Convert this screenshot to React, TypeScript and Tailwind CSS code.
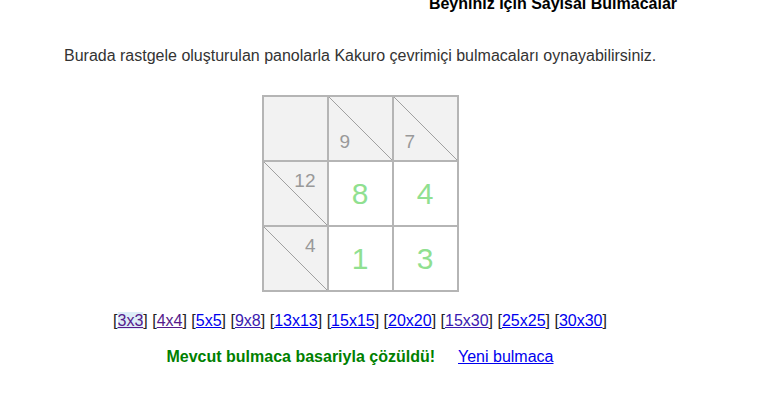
import React from "react";

type Cell =
  | { kind: "blank" }
  | { kind: "down"; value: number }
  | { kind: "across"; value: number }
  | { kind: "answer"; value: number };

const board: Cell[][] = [
  [{ kind: "blank" }, { kind: "down", value: 9 }, { kind: "down", value: 7 }],
  [{ kind: "across", value: 12 }, { kind: "answer", value: 8 }, { kind: "answer", value: 4 }],
  [{ kind: "across", value: 4 }, { kind: "answer", value: 1 }, { kind: "answer", value: 3 }],
];

const sizes: { label: string; color: string; active?: boolean }[] = [
  { label: "3x3", color: "text-[#551a8b]", active: true },
  { label: "4x4", color: "text-[#551a8b]" },
  { label: "5x5", color: "text-[#0000ee]" },
  { label: "9x8", color: "text-[#3b1ab0]" },
  { label: "13x13", color: "text-[#0000ee]" },
  { label: "15x15", color: "text-[#0000ee]" },
  { label: "20x20", color: "text-[#0000ee]" },
  { label: "15x30", color: "text-[#3b1ab0]" },
  { label: "25x25", color: "text-[#0000ee]" },
  { label: "30x30", color: "text-[#0000ee]" },
];

function Diagonal() {
  return (
    <svg className="absolute inset-0 h-full w-full" viewBox="0 0 63 63" preserveAspectRatio="none">
      <line x1="0" y1="0" x2="63" y2="63" stroke="#a0a0a0" strokeWidth="1" />
    </svg>
  );
}

function KakuroCell({ cell }: { cell: Cell }) {
  if (cell.kind === "answer") {
    return (
      <div className="flex h-[63px] w-[63px] items-center justify-center bg-white text-[30px] text-[#90e090]">
        {cell.value}
      </div>
    );
  }
  return (
    <div className="relative h-[63px] w-[63px] bg-[#f2f2f2] text-[19px] text-[#999]">
      {cell.kind !== "blank" && <Diagonal />}
      {cell.kind === "down" && (
        <span className="absolute bottom-[9px] left-[11px] leading-none">{cell.value}</span>
      )}
      {cell.kind === "across" && (
        <span className="absolute right-[11px] top-[9px] leading-none">{cell.value}</span>
      )}
    </div>
  );
}

export default function App() {
  return (
    <div className="h-[409px] w-[757px] overflow-hidden bg-white font-['Liberation_Sans',Arial,sans-serif] text-[16px] text-[#222]">
      <div className="mt-[-5px] pr-[80px] text-right text-[16px] font-bold leading-[18px] text-black">
        Beyniniz İçin Sayısal Bulmacalar
      </div>

      <p className="mt-[34px] pl-[64px] leading-[18px] text-[#333]">
        Burada rastgele oluşturulan panolarla Kakuro çevrimiçi bulmacaları oynayabilirsiniz.
      </p>

      <div className="w-[720px]">
        <div className="mx-auto mt-[30px] grid w-fit grid-cols-3 gap-[2px] border-2 border-[#b5b5b5] bg-[#b5b5b5]">
          {board.map((row, r) =>
            row.map((cell, c) => <KakuroCell key={`${r}-${c}`} cell={cell} />)
          )}
        </div>

        <div className="mt-[20px] text-center leading-[18px]">
          {sizes.map((s, i) => (
            <React.Fragment key={s.label}>
              {i > 0 && " "}
              [
              <a
                href="#"
                className={`underline ${s.color} ${s.active ? "bg-[#dcedf7]" : ""}`}
              >
                {s.label}
              </a>
              ]
            </React.Fragment>
          ))}
        </div>

        <div className="mt-[18px] flex justify-center gap-[23px] leading-[18px]">
          <span className="font-bold text-[#008000]">Mevcut bulmaca basariyla çözüldü!</span>
          <a href="#" className="text-[#0000ee] underline">
            Yeni bulmaca
          </a>
        </div>
      </div>
    </div>
  );
}
